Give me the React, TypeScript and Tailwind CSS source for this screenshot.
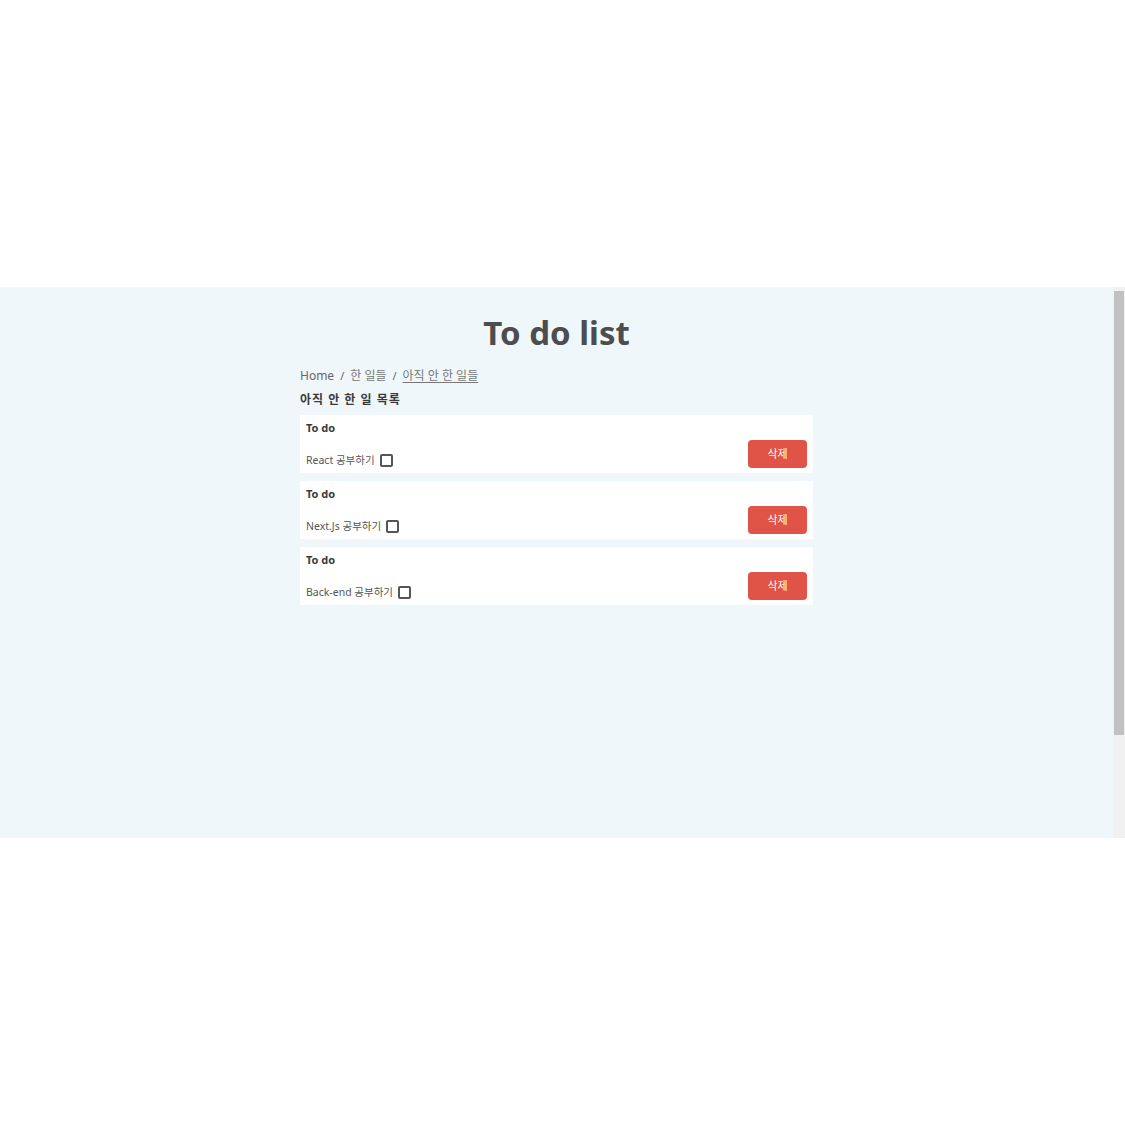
import React from "react";

const items = ["React 공부하기", "Next.Js 공부하기", "Back-end 공부하기"];

export default function App() {
  return (
    <div
      className="w-[1125px] h-[1125px] bg-white"
      style={{ fontFamily: '"Noto Sans", "Noto Sans CJK KR", sans-serif' }}
    >
      <div className="h-[287px]" />
      <div className="flex h-[551px]">
        <div className="flex-1 bg-[#eff7fa]">
          <div className="w-[513px] mx-auto pt-[23px]">
            <h1 className="text-center text-[33px] leading-[45px] font-bold text-[#4d4d4d]">
              To do list
            </h1>
            <nav className="mt-[12px] flex items-center gap-[6px] text-[12px] leading-[18px] text-[#666]">
              <span>Home</span>
              <span className="text-[11px]">/</span>
              <span className="text-[#777]">한 일들</span>
              <span className="text-[11px]">/</span>
              <span className="text-[#777] underline underline-offset-2">아직 안 한 일들</span>
            </nav>
            <h2 className="mt-[7px] text-[12px] leading-[16px] font-bold text-[#3a3a3a] tracking-[1px]">
              아직 안 한 일 목록
            </h2>
            <div className="mt-[7px] flex flex-col gap-[8px]">
              {items.map((t) => (
                <div key={t} className="bg-white px-[6px] pt-[6px] pb-[5px]">
                  <div className="text-[11px] leading-[14px] font-bold text-[#3a3a3a]">To do</div>
                  <div className="mt-[5px] flex items-end justify-between">
                    <div className="flex items-center gap-[5px] pb-[1px]">
                      <span className="text-[10.5px] leading-[14px] text-[#555]">{t}</span>
                      <span className="w-[13px] h-[13px] border-2 border-[#555] rounded-[2px] bg-white" />
                    </div>
                    <button className="w-[59px] h-[28px] rounded-[4px] bg-[#e05347] text-white text-[11px]">
                      삭제
                    </button>
                  </div>
                </div>
              ))}
            </div>
          </div>
        </div>
        <div className="w-[12px] bg-[#f1f1f1] flex flex-col pt-[4px] px-[1px]">
          <div className="h-[444px] bg-[#c1c1c1]" />
        </div>
      </div>
    </div>
  );
}
